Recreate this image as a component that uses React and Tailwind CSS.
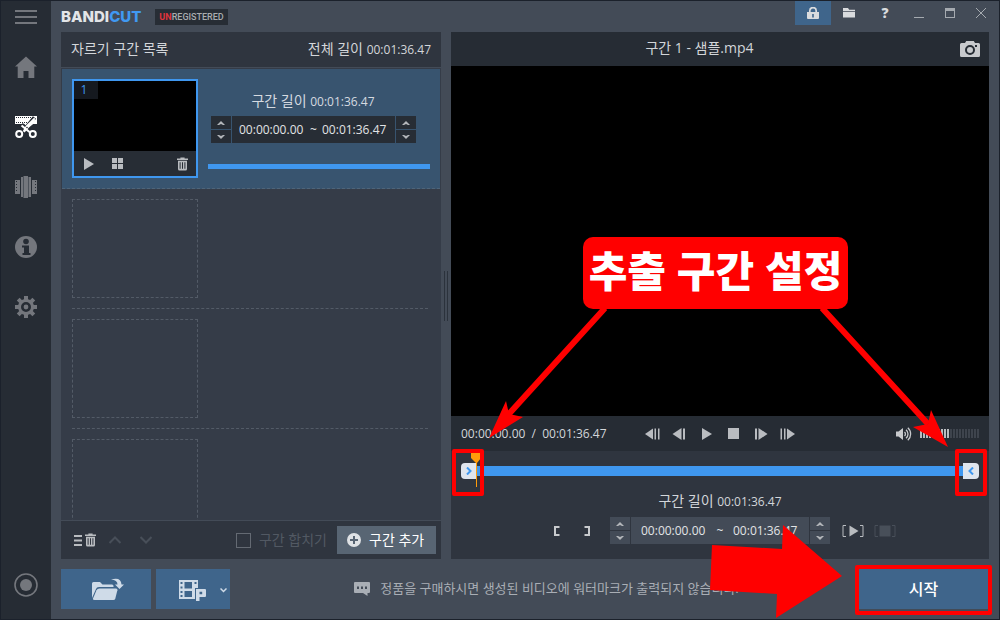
// Video cutter window: segment list on the left, player and trim controls on the right.

import { useState } from "react";

function TrashIcon({ className }) {
  return (
    <svg viewBox="0 0 11 14" className={className} fill="currentColor" aria-hidden="true">
      <path d="M0 1.6h3.4V0.4h4.2v1.2H11v1.3H0z" />
      <path fillRule="evenodd" d="M1 3.8h9V12a1.5 1.5 0 0 1-1.5 1.5h-6A1.5 1.5 0 0 1 1 12zM2.6 5.3v6.4h1V5.3zm2.4 0v6.4h1V5.3zm2.4 0v6.4h1V5.3z" />
    </svg>
  );
}

function PlayIcon({ className }) {
  return (
    <svg viewBox="0 0 10 12" className={className} fill="currentColor" aria-hidden="true">
      <path d="M0 0l10 6-10 6z" />
    </svg>
  );
}

// Frame step icons; "bars" is how many strokes stand beside the triangle.
function StepIcon({ bars, back }) {
  return (
    <svg viewBox="0 0 15 12" className={`h-3 w-[15px] ${back ? "-scale-x-100" : ""}`} fill="currentColor" aria-hidden="true">
      {bars === 2 && <path d="M0.500 0.500h1.500v11H0.500z" />}
      <path d={bars === 2 ? "M4 0.500h1.500v11H4z" : "M2 0.500h2v11H2z"} />
      <path d={bars === 2 ? "M7 0.500l8 5.500-8 5.500z" : "M5.500 0l9 6-9 6z"} />
    </svg>
  );
}

const sideIcons = [
  {
    label: "Home",
    icon: <path fill="currentColor" d="M11 0.5L22 10.5h-2.7V22h-5.8v-7h-5v7H2.7V10.5H0z" />,
  },
  {
    label: "Cut",
    active: true,
    icon: (
      <>
        <path fill="currentColor" d="M0 0h22v8h-4l-4 3-3-1.5L9 8H0z" />
        <path d="M1 1.5h20M1 6.5h15" stroke="#262c34" strokeDasharray="1 1" />
        <path d="M19.5 1.5L8 15.5M6.5 8.5L14 15.5" stroke="#262c34" strokeWidth="4" />
        <path fill="currentColor" d="M19.8 1L20 6l-6 5.5L9.6 16.6 7.8 15 11 9.5z" />
        <path d="M6.5 9.5l8 6.5" stroke="currentColor" strokeWidth="2.2" />
        <circle cx="4.2" cy="18" r="3" stroke="currentColor" strokeWidth="2" fill="none" />
        <circle cx="17.8" cy="18" r="3" stroke="currentColor" strokeWidth="2" fill="none" />
        <circle cx="12" cy="11.5" r="0.8" fill="#262c34" />
      </>
    ),
  },
  {
    label: "Join",
    icon: (
      <>
        <path fill="currentColor" d="M0 4h5v14H0zM17 4h5v14h-5z" />
        <path fill="currentColor" d="M6 1h2.5V0H13v1h3v20h-3v1H8.500V21H6z" />
        <path d="M1.500 5v12M20.500 5v12" stroke="#262c34" strokeDasharray="1 2" />
        <path d="M8.500 1v20M13.500 1v20" stroke="#4c525a" />
      </>
    ),
  },
  {
    label: "Info",
    icon: (
      <>
        <circle cx="11" cy="11" r="11" fill="currentColor" />
        <circle cx="11" cy="5.500" r="2.800" fill="#262c34" />
        <path d="M7 9.500h7V17h1.500v2h-8v-2H9v-5.500H7z" fill="#262c34" />
      </>
    ),
  },
  {
    label: "Settings",
    icon: (
      <>
        <g stroke="currentColor" strokeWidth="4">
          <path d="M11 0v22M0 11h22M3.200 3.200l15.600 15.600M18.800 3.200L3.200 18.800" />
        </g>
        <circle cx="11" cy="11" r="8" fill="currentColor" />
        <circle cx="11" cy="11" r="3.700" fill="none" stroke="#262c34" strokeWidth="2.600" />
      </>
    ),
  },
];

function Sidebar() {
  return (
    <nav className="flex w-[50px] shrink-0 flex-col bg-[#262c34] text-[#74777d]">
      <button type="button" aria-label="Menu" className="mb-1 grid h-8 place-items-center">
        <svg viewBox="0 0 22 14" className="h-3.5 w-[22px]" stroke="currentColor" strokeWidth="2" aria-hidden="true">
          <path d="M0 1h22M0 7h22M0 13h22" />
        </svg>
      </button>
      {sideIcons.map(({ label, icon, active }) => (
        <button
          key={label}
          type="button"
          aria-label={label}
          className={`grid h-[60px] place-items-center ${active ? "text-white" : ""}`}
        >
          <svg viewBox="0 0 22 22" className="h-[22px] w-[22px]" fill="none" aria-hidden="true">
            {icon}
          </svg>
        </button>
      ))}
      <button type="button" aria-label="Record" className="mt-auto mb-1 grid h-[60px] place-items-center">
        <svg viewBox="0 0 24 24" className="h-6 w-6" aria-hidden="true">
          <circle cx="12" cy="12" r="11" fill="none" stroke="currentColor" strokeWidth="1.600" />
          <circle cx="12" cy="12" r="6" fill="currentColor" />
        </svg>
      </button>
    </nav>
  );
}

function TitleBar() {
  return (
    <header className="flex h-[31px] shrink-0 items-start justify-between pr-[3px] pl-2.5">
      <div className="flex items-center gap-3.5 pt-2">
        <h1 className="font-['Inter',sans-serif] text-[15px] leading-4 font-extrabold text-[#e3e5e8]">
          BANDI<span className="text-[#4099f2]">CUT</span>
        </h1>
        <span className="h-4 bg-[#272d35] px-1 font-['Roboto',sans-serif] text-[9px] leading-4 font-medium text-[#a9acb0]">
          <b className="text-[#e0343c]">UN</b>REGISTERED
        </span>
      </div>
      <div className="flex text-[#d9dbde]">
        <button type="button" aria-label="Purchase" className="grid h-6 w-9 place-items-center bg-[#3f658b]">
          <svg viewBox="0 0 12 12" className="h-3 w-3" aria-hidden="true">
            <path d="M2.800 6V3.800a3.200 3.200 0 0 1 6.400 0V6" fill="none" stroke="currentColor" strokeWidth="1.700" />
            <path fillRule="evenodd" fill="currentColor" d="M0 5h12v6a1 1 0 0 1-1 1H1a1 1 0 0 1-1-1zm5.200 2v3.500h1.600V7z" />
          </svg>
        </button>
        <button type="button" aria-label="Open folder" className="grid h-6 w-9 place-items-center">
          <svg viewBox="0 0 12 10" className="h-2.5 w-3" fill="currentColor" aria-hidden="true">
            <path d="M0 0h5l1.200 1.800H12v1.400H0zM0 4h12v5.500H0z" />
          </svg>
        </button>
        <button type="button" aria-label="Help" className="h-6 w-9 font-['Open_Sans',sans-serif] text-sm leading-6 font-extrabold">
          ?
        </button>
        <button type="button" aria-label="Minimize" className="grid h-6 w-[31px] place-items-center">
          <span className="mt-2 h-px w-2.5 bg-[#a5aab0]" />
        </button>
        <button type="button" aria-label="Maximize" className="grid h-6 w-[31px] place-items-center">
          <span className="h-2.5 w-2.5 border border-t-3 border-[#a5aab0]" />
        </button>
        <button type="button" aria-label="Close" className="grid h-6 w-[31px] place-items-center text-[#a5aab0]">
          <svg viewBox="0 0 10 10" className="h-2.5 w-2.5" stroke="currentColor" aria-hidden="true">
            <path d="M0 0l10 10M10 0L0 10" />
          </svg>
        </button>
      </div>
    </header>
  );
}

function Spinner({ label, tone }) {
  return (
    <div className="grid w-5 shrink-0 gap-px text-[#b4b7bb]">
      <button type="button" aria-label={`${label} up`} className={`grid h-[13px] place-items-center ${tone}`}>
        <svg viewBox="0 0 8 4" className="h-1 w-2" fill="currentColor" aria-hidden="true">
          <path d="M0 4l4-4 4 4-2 0-2-1-2 1z" />
        </svg>
      </button>
      <button type="button" aria-label={`${label} down`} className={`grid h-[13px] place-items-center ${tone}`}>
        <svg viewBox="0 0 8 4" className="h-1 w-2" fill="currentColor" aria-hidden="true">
          <path d="M0 0l4 4 4-4-2 0-2 1-2-1z" />
        </svg>
      </button>
    </div>
  );
}

function TimeRange({ tone, width }) {
  const [start, setStart] = useState("00:00:00.00");
  const [end, setEnd] = useState("00:01:36.47");
  const field = "w-[66px] bg-transparent p-0 text-xs text-[#e2e4e6] outline-none";

  return (
    <div className="flex gap-px">
      <Spinner label="Start time" tone={tone} />
      <div className={`flex items-center justify-between ${tone} ${width}`}>
        <input aria-label="Start time" value={start} onChange={(e) => setStart(e.target.value)} className={field} />
        <span className="text-xs text-[#e2e4e6]">~</span>
        <input aria-label="End time" value={end} onChange={(e) => setEnd(e.target.value)} className={field} />
      </div>
      <Spinner label="End time" tone={tone} />
    </div>
  );
}

function Segment() {
  return (
    <li className="flex h-[120px] shrink-0 border-b border-dashed border-[#4f6478] bg-[#38546f] pt-2.5 pr-2.5 pl-2.5">
      <div className="flex h-[99px] w-[126px] shrink-0 flex-col border-2 border-[#3f97ef] bg-black">
        <span className="h-[18px] w-6 bg-[#15191f] pr-1 text-center text-xs leading-[18px] text-[#3f97ef]">1</span>
        <div className="mt-auto flex h-[25px] items-center bg-[#272d35] px-2 text-[#b9bcc0]">
          <button type="button" aria-label="Play segment" className="ml-0.5">
            <PlayIcon className="h-3 w-2.5" />
          </button>
          <button type="button" aria-label="Split segment" className="ml-[18px]">
            <svg viewBox="0 0 11 11" className="h-[11px] w-[11px]" fill="currentColor" aria-hidden="true">
              <path d="M0 0h5v5H0zM6 0h5v5H6zM0 6h5v5H0zM6 6h5v5H6z" />
            </svg>
          </button>
          <button type="button" aria-label="Delete segment" className="ml-auto">
            <TrashIcon className="h-3.5 w-[11px]" />
          </button>
        </div>
      </div>
      <div className="flex min-w-0 flex-1 flex-col pl-2.5">
        <p className="mt-3 mb-[5px] pr-3 text-center text-sm leading-5 text-[#d5dae0]">
          구간 길이 <span className="text-xs">00:01:36.47</span>
        </p>
        <div className="pl-[3px]">
          <TimeRange tone="bg-[#272d35]" width="w-[163px] px-[7px]" />
        </div>
        <div className="mt-[21px] h-[5px] bg-[#3f97ef]" />
      </div>
    </li>
  );
}

function EmptySlot() {
  return (
    <li className="mr-3 ml-2.5 h-[120px] shrink-0 border-b border-dashed border-[#535b67] pt-2.5">
      <div className="h-[99px] w-[126px] border border-dashed border-[#535b67]" />
    </li>
  );
}

function SegmentPanel() {
  return (
    <section className="flex w-[380px] shrink-0 flex-col bg-[#353c48]">
      <div className="flex h-9 shrink-0 items-center justify-between border-b border-[#434b57] bg-[#2f353f] px-2.5 pb-0.5 text-sm text-[#d3d6da]">
        <h2>자르기 구간 목록</h2>
        <p>
          전체 길이 <span className="text-xs">00:01:36.47</span>
        </p>
      </div>
      <ul className="mx-px mt-px flex min-h-0 flex-1 flex-col overflow-hidden">
        <Segment />
        <EmptySlot />
        <EmptySlot />
        <EmptySlot />
      </ul>
      <div className="flex h-[39px] shrink-0 items-center border-t border-[#434b57] bg-[#2f353f] pr-[5px] pl-[13px]">
        <button type="button" aria-label="Clear list" className="flex items-center gap-[3px] text-[#b9bcc0]">
          <svg viewBox="0 0 8 11" className="h-[11px] w-2" stroke="currentColor" strokeWidth="2" aria-hidden="true">
            <path d="M0 1h8M0 5.500h8M0 10h8" />
          </svg>
          <TrashIcon className="h-3.5 w-[11px]" />
        </button>
        <button type="button" aria-label="Move up" className="ml-[13px] text-[#484f59]">
          <svg viewBox="0 0 12 8" className="h-2 w-3" fill="none" stroke="currentColor" strokeWidth="2" aria-hidden="true">
            <path d="M0.500 7L6 1.500 11.500 7" />
          </svg>
        </button>
        <button type="button" aria-label="Move down" className="ml-[19px] text-[#484f59]">
          <svg viewBox="0 0 12 8" className="h-2 w-3" fill="none" stroke="currentColor" strokeWidth="2" aria-hidden="true">
            <path d="M0.500 1L6 6.500 11.500 1" />
          </svg>
        </button>
        <label className="ml-auto flex items-center gap-2 text-sm text-[#525963]">
          <input type="checkbox" className="h-[15px] w-[15px] appearance-none border border-[#646a73] checked:bg-[#646a73]" />
          구간 합치기
        </label>
        <button type="button" className="ml-2.5 flex h-7 w-[99px] items-center gap-2 bg-[#586573] pl-2.5 text-sm text-white">
          <svg viewBox="0 0 14 14" className="h-3.5 w-3.5" aria-hidden="true">
            <circle cx="7" cy="7" r="7" fill="#dfe2e5" />
            <path d="M7 3v8M3 7h8" stroke="#586573" strokeWidth="2" />
          </svg>
          구간 추가
        </button>
      </div>
    </section>
  );
}

function Volume() {
  const [level, setLevel] = useState(10);

  return (
    <div className="flex items-center gap-2 justify-self-end text-[#c8cacd]">
      <button type="button" aria-label="Mute">
        <svg viewBox="0 0 16 14" className="h-3.5 w-4" fill="none" stroke="currentColor" strokeWidth="1.300" aria-hidden="true">
          <path d="M0 4.500h2.500L7 1v12L2.500 9.500H0z" fill="currentColor" stroke="none" />
          <path d="M8.500 5a2.600 2.600 0 0 1 0 4M10 2.800a5.400 5.400 0 0 1 0 8.400M11.800 0.800a8.200 8.200 0 0 1 0 12.400" />
        </svg>
      </button>
      <div className="relative flex gap-px">
        {Array.from({ length: 20 }, (_, i) => (
          <span key={i} className={`h-[9px] w-0.5 ${i < level ? "bg-[#b9bcc0]" : "bg-[#3e444d]"}`} />
        ))}
        <input
          type="range"
          aria-label="Volume"
          min="0"
          max="20"
          value={level}
          onChange={(e) => setLevel(Number(e.target.value))}
          className="absolute inset-0 h-full w-full opacity-0"
        />
      </div>
    </div>
  );
}

function Timeline() {
  const [position, setPosition] = useState(0);

  return (
    <div className="relative flex h-10 items-center px-2.5">
      <button type="button" aria-label="Trim start" className="grid h-4 w-[15px] shrink-0 place-items-center rounded-l bg-[#dfe5ee] text-[#3f97ef]">
        <svg viewBox="0 0 6 8" className="h-2 w-1.5" fill="none" stroke="currentColor" strokeWidth="2" aria-hidden="true">
          <path d="M1 0.500L4.500 4 1 7.500" />
        </svg>
      </button>
      <input
        type="range"
        aria-label="Position"
        value={position}
        onChange={(e) => setPosition(e.target.value)}
        className="h-2.5 min-w-0 flex-1 appearance-none bg-[#3f97ef] [&::-webkit-slider-thumb]:h-2.5 [&::-webkit-slider-thumb]:w-px [&::-webkit-slider-thumb]:appearance-none [&::-webkit-slider-thumb]:bg-[#ff9c0a]"
      />
      <button type="button" aria-label="Trim end" className="grid h-4 w-4 shrink-0 place-items-center rounded-r bg-[#dfe5ee] text-[#3f97ef]">
        <svg viewBox="0 0 6 8" className="h-2 w-1.5" fill="none" stroke="currentColor" strokeWidth="2" aria-hidden="true">
          <path d="M5 0.500L1.500 4 5 7.500" />
        </svg>
      </button>
      <svg viewBox="0 0 10 36" className="pointer-events-none absolute top-0.5 left-5 h-9 w-2.5" aria-hidden="true">
        <path d="M0 0h10v5L6 10v24H5V10L0 5z" fill="#ff9c0a" />
      </svg>
    </div>
  );
}

function PlayerPanel() {
  return (
    <section className="flex min-w-0 flex-1 flex-col bg-[#2f353f]">
      <div className="grid h-[34px] shrink-0 grid-cols-[1fr_auto_1fr] items-center bg-[#262c34] pr-[9px] text-sm text-[#d3d6da]">
        <h2 className="col-start-2 pr-8 pb-0.5">
          구간 1 - 샘플.mp4
        </h2>
        <button type="button" aria-label="Capture frame" className="justify-self-end text-[#c8cacd]">
          <svg viewBox="0 0 20 16" className="h-4 w-5" aria-hidden="true">
            <path fill="currentColor" d="M1.500 2H5l1.200-2h7.600L15 2h3.500A1.500 1.500 0 0 1 20 3.500v11a1.500 1.500 0 0 1-1.500 1.500h-17A1.500 1.500 0 0 1 0 14.500v-11A1.500 1.500 0 0 1 1.500 2z" />
            <circle cx="10" cy="9" r="4" fill="none" stroke="#262c34" strokeWidth="2" />
            <path d="M15 4h2v2h-2z" fill="#262c34" />
          </svg>
        </button>
      </div>
      <div className="min-h-0 flex-1 bg-black" />
      <div className="grid h-[35px] shrink-0 grid-cols-[1fr_auto_1fr] items-center bg-[#262c34] px-2.5">
        <p className="text-xs text-[#d3d6da]">
          00:00:00.00&nbsp; / &nbsp;00:01:36.47
        </p>
        <div className="flex items-center gap-3 text-[#b9bcc0]">
          <button type="button" aria-label="Previous keyframe">
            <StepIcon bars={2} back />
          </button>
          <button type="button" aria-label="Previous frame">
            <StepIcon bars={1} back />
          </button>
          <button type="button" aria-label="Play" className="flex w-[15px] justify-center">
            <PlayIcon className="h-3 w-2.5" />
          </button>
          <button type="button" aria-label="Stop" className="flex w-[15px] justify-center">
            <span className="h-[11px] w-[11px] bg-current" />
          </button>
          <button type="button" aria-label="Next frame">
            <StepIcon bars={1} />
          </button>
          <button type="button" aria-label="Next keyframe">
            <StepIcon bars={2} />
          </button>
        </div>
        <Volume />
      </div>
      <div className="flex h-[108px] shrink-0 flex-col">
        <Timeline />
        <p className="mb-1.5 text-center text-sm leading-5 text-[#d3d6da]">
          구간 길이 <span className="text-xs">00:01:36.47</span>
        </p>
        <div className="grid grid-cols-[1fr_auto_1fr] items-center">
          <div className="flex gap-6 justify-self-end pr-5 text-[#c8cacd]">
            <button type="button" aria-label="Set start">
              <svg viewBox="0 0 6 10" className="h-2.5 w-1.5" fill="none" stroke="currentColor" strokeWidth="2" aria-hidden="true">
                <path d="M5.500 1H1v8h4.500" />
              </svg>
            </button>
            <button type="button" aria-label="Set end">
              <svg viewBox="0 0 6 10" className="h-2.5 w-1.5" fill="none" stroke="currentColor" strokeWidth="2" aria-hidden="true">
                <path d="M0.500 1H5v8H0.500" />
              </svg>
            </button>
          </div>
          <TimeRange tone="bg-[#434b57]" width="w-[178px] px-2.5" />
          <div className="flex gap-2.5 pl-3">
            <button type="button" aria-label="Play selection" className="text-[#b9bcc0]">
              <svg viewBox="0 0 22 12" className="h-3 w-[22px]" aria-hidden="true">
                <path d="M4 0.500H1v11h3M18 0.500h3v11h-3" fill="none" stroke="currentColor" />
                <path d="M7.500 0.500l9 5.500-9 5.500z" fill="currentColor" />
              </svg>
            </button>
            <button type="button" aria-label="Stop selection" disabled className="text-[#484f59]">
              <svg viewBox="0 0 22 12" className="h-3 w-[22px]" aria-hidden="true">
                <path d="M4 0.500H1v11h3M18 0.500h3v11h-3" fill="none" stroke="currentColor" />
                <path d="M5.500 0.500h11v11h-11z" fill="currentColor" />
              </svg>
            </button>
          </div>
        </div>
      </div>
    </section>
  );
}

function ActionBar() {
  return (
    <footer className="flex h-[60px] shrink-0 items-center pr-[11px] pl-2.5">
      <button type="button" aria-label="Open video" className="grid h-10 w-[90px] shrink-0 place-items-center bg-[#3f658b] text-[#cfdbe8]">
        <svg viewBox="0 0 32 23" className="ml-1 h-[23px] w-8" fill="currentColor" aria-hidden="true">
          <path d="M0 20V5.500Q0 4 1.500 4H8l2.500 2.500H20q1.500 0 1.500 1.500v1H7Q4.500 9 4 11z" />
          <path d="M7.500 10.500H24q1.800 0 1.400 1.700l-2.100 8.300q-.4 1.500-1.900 1.500H2.500Q.700 22 1 20.500l3.500-8.300q.8-1.700 3-1.700z" />
          <path d="M19 1.500Q29-1.500 29.500 6.500H32L27.500 11 23 6.500h2.500Q25.500 2 19 1.500z" />
        </svg>
      </button>
      <button type="button" aria-label="Export options" className="ml-[5px] flex h-10 w-[74px] shrink-0 items-center bg-[#3f658b] pt-0.5 pl-[23px] text-[#cfdbe8]">
        <svg viewBox="0 0 27 21" className="h-[21px] w-[27px]" fill="currentColor" aria-hidden="true">
          <path
            fillRule="evenodd"
            d="M0 0h19v8h-3v11H0zM1.500 2v2h2V2zm0 4.500v2h2v-2zm0 4.500v2h2v-2zm0 4v2h2v-2zM5.500 2v6.500h7.500V2zm0 9v6H13v-6zM15.500 2v2h2V2z"
          />
          <path fillRule="evenodd" d="M17 9h9q1 0 1 1v6q0 1-1 1h-5.500v4H17zm3.500 2.800v2.400h2.700v-2.400z" />
        </svg>
        <svg viewBox="0 0 7 5" className="ml-3.5 h-[5px] w-[7px]" fill="none" stroke="currentColor" strokeWidth="1.500" aria-hidden="true">
          <path d="M0.500 0.500l3 3 3-3" />
        </svg>
      </button>
      <p className="flex min-w-0 flex-1 items-center justify-center gap-2.5 pl-1 text-[13px] whitespace-nowrap text-[#a9aeb5]">
        <svg viewBox="0 0 16 14" className="h-3.5 w-4" aria-hidden="true">
          <path fill="currentColor" d="M1 0h14q1 0 1 1v9q0 1-1 1h-1.500v3L9 11H1q-1 0-1-1V1q0-1 1-1z" />
          <path d="M3 4.500h2v2.500H3zM7 4.500h2v2.500H7zM11 4.500h2v2.500h-2z" fill="#434b57" />
        </svg>
        정품을 구매하시면 생성된 비디오에 워터마크가 출력되지 않습니다.
      </p>
      <button type="button" className="h-10 w-[129px] shrink-0 bg-[#3f658b] text-base font-medium text-white">
        시작
      </button>
    </footer>
  );
}

// Tutorial marks drawn over the window.
function Annotations() {
  return (
    <div className="pointer-events-none absolute -inset-px">
      <svg viewBox="0 0 1000 620" className="h-full w-full" fill="#ff0000" aria-hidden="true">
        <g stroke="#ff0000" strokeWidth="6">
          <path d="M605 308L508 415M822 308L928 424" />
        </g>
        <path d="M489 438l17-37 3 13 14 3zM948 447l-17-37-3 14-15 3z" />
        <path d="M712 545l70 4 1-24 59 51-66 42 1-24-67-4z" />
        <g fill="none" stroke="#ff0000" strokeWidth="4" strokeLinejoin="round">
          <rect x="454" y="451" width="28" height="43" />
          <rect x="957" y="451" width="28" height="43" />
          <rect x="857" y="567" width="133" height="46" />
        </g>
      </svg>
      <p className="absolute top-[237px] left-[583px] flex h-[72px] w-[265px] items-center justify-center rounded-[10px] bg-[#ff0000] pb-1 text-[42px] leading-none font-black whitespace-nowrap text-white">
        추출 구간 설정
      </p>
    </div>
  );
}

export default function App() {
  return (
    <div className="relative flex h-screen overflow-hidden border border-[#1b212b] bg-[#434b57] font-['Open_Sans','Noto_Sans_CJK_KR',sans-serif]">
      <Sidebar />
      <div className="flex min-w-0 flex-1 flex-col">
        <TitleBar />
        <main className="flex min-h-0 flex-1 pr-2.5 pl-2.5">
          <SegmentPanel />
          <div className="flex w-2.5 shrink-0 items-center justify-center">
            <span className="h-[50px] w-1 border-x border-[#2b323c]" />
          </div>
          <PlayerPanel />
        </main>
        <ActionBar />
      </div>
      <Annotations />
    </div>
  );
}
